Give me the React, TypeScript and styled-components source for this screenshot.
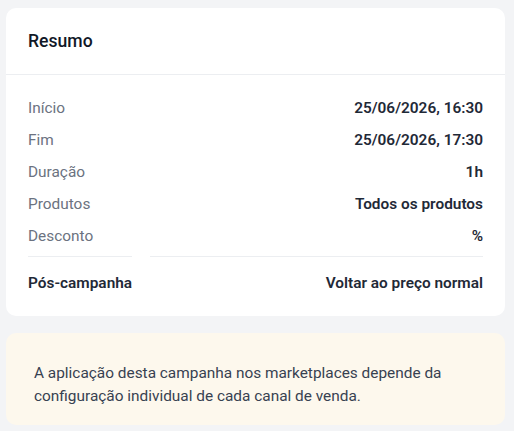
import React from "react";
import styled, { createGlobalStyle } from "styled-components";

type Row = { label: string; value: string };

const rows: Row[] = [
  { label: "Início", value: "25/06/2026, 16:30" },
  { label: "Fim", value: "25/06/2026, 17:30" },
  { label: "Duração", value: "1h" },
  { label: "Produtos", value: "Todos os produtos" },
  { label: "Desconto", value: "%" },
];

const App: React.FC = () => {
  return (
    <Page>
      <GlobalStyle />
      <Card>
        <Header>
          <Title>Resumo</Title>
        </Header>
        <Details>
          {rows.map((row) => (
            <React.Fragment key={row.label}>
              <Term>{row.label}</Term>
              <Value>{row.value}</Value>
            </React.Fragment>
          ))}
          <Term $strong $divided>
            Pós-campanha
          </Term>
          <Value $divided>Voltar ao preço normal</Value>
        </Details>
      </Card>
      <Notice>
        A aplicação desta campanha nos marketplaces depende da configuração
        individual de cada canal de venda.
      </Notice>
    </Page>
  );
};

export default App;

const GlobalStyle = createGlobalStyle`
  html, body {
    margin: 0;
    padding: 0;
    background: #f3f4f6;
  }

  body {
    font-family: Roboto, "Liberation Sans", sans-serif;
    -webkit-font-smoothing: antialiased;
  }
`;

const Page = styled.div`
  width: 499px;
  padding: 8px 0 7px 6px;
  display: flex;
  flex-direction: column;
  gap: 17px;
`;

const Card = styled.section`
  background: #ffffff;
  border-radius: 10px;
  overflow: hidden;
`;

const Header = styled.header`
  height: 66px;
  padding: 0 22px;
  display: flex;
  align-items: center;
  border-bottom: 1px solid #eceef1;
`;

const Title = styled.h2`
  margin: 0;
  font-size: 17.6px;
  font-weight: 500;
  color: #111827;
`;

const Details = styled.div`
  display: grid;
  grid-template-columns: auto 1fr;
  column-gap: 18px;
  row-gap: 12px;
  padding: 23px 22px 23px;
  font-size: 15.4px;
  line-height: 20px;
`;

const divider = `
  border-top: 1px solid #eceef1;
  padding-top: 16px;
  margin-top: -2px;
`;

const Term = styled.div<{ $strong?: boolean; $divided?: boolean }>`
  color: ${(p) => (p.$strong ? "#1f2937" : "#6b7280")};
  font-weight: ${(p) => (p.$strong ? 600 : 400)};
  ${(p) => p.$divided && divider}
`;

const Value = styled.div<{ $divided?: boolean }>`
  text-align: right;
  color: #1f2937;
  font-weight: 600;
  ${(p) => p.$divided && divider}
`;

const Notice = styled.div`
  background: #fdf8ed;
  border-radius: 10px;
  padding: 29px 28px 17px;
  font-size: 15.4px;
  line-height: 23px;
  color: #374151;
`;
